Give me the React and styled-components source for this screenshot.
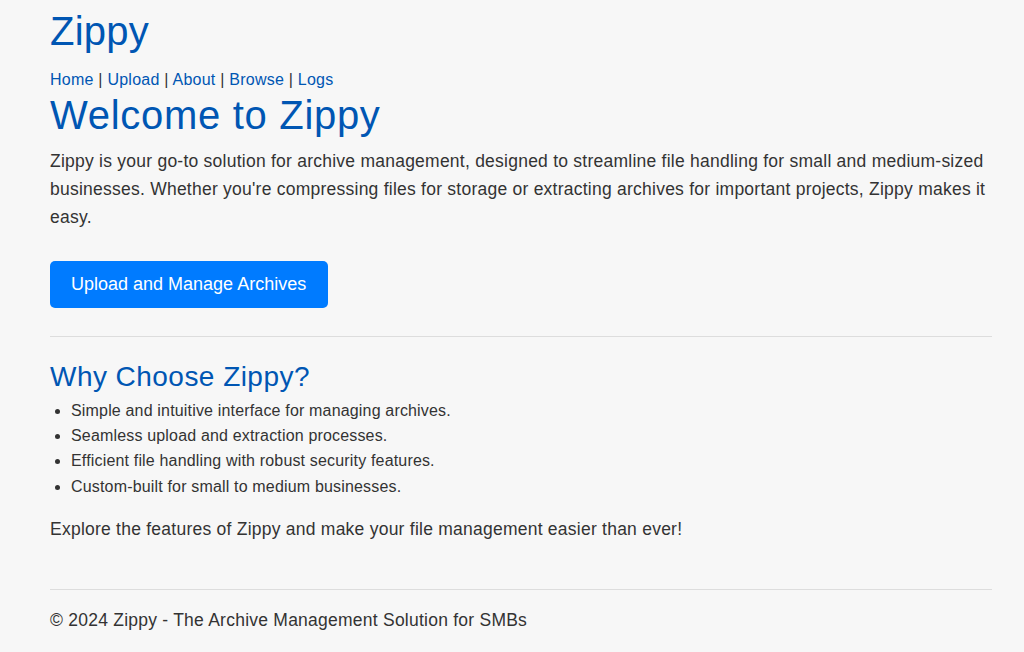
import React from "react";
import styled, { createGlobalStyle } from "styled-components";

const GlobalStyle = createGlobalStyle`
  html, body {
    margin: 0;
    padding: 0;
    background: #f7f7f7;
  }
  body {
    font-family: "Liberation Sans", Arial, sans-serif;
    font-size: 16px;
    line-height: 1.6;
    letter-spacing: 0.015em;
    color: #333;
  }
`;

const Page = styled.div`
  padding: 0 32px 0 50px;
`;

const Header = styled.header`
  padding-top: 7px;
`;

const Brand = styled.h1`
  margin: 0;
  font-size: 40px;
  font-weight: normal;
  line-height: 1.2;
  color: #0056b3;
`;

const Nav = styled.nav`
  margin-top: 15px;
  line-height: 1.2;
  color: #333;
`;

const NavLink = styled.a`
  color: #0056b3;
  text-decoration: none;
`;

const Title = styled.h2`
  margin: 2px 0 0;
  font-size: 40px;
  font-weight: normal;
  line-height: 1.2;
  letter-spacing: 0.7px;
  color: #0056b3;
`;

const Intro = styled.p`
  margin: 8px 0 0;
  font-size: 17.5px;
  line-height: 28px;
`;

const Button = styled.a`
  display: inline-block;
  margin-top: 30px;
  padding: 10px 22px 10px 21px;
  font-size: 18px;
  line-height: 27px;
  letter-spacing: 0;
  color: #fff;
  background: #007bff;
  border-radius: 5px;
  text-decoration: none;
`;

const Rule = styled.hr`
  margin: ${(p) => p.$top}px 0 0;
  border: 0;
  border-top: 1px solid #ddd;
`;

const Section = styled.section`
  padding-top: 23px;
`;

const SubTitle = styled.h3`
  margin: 0;
  font-size: 28px;
  font-weight: normal;
  line-height: 1.2;
  letter-spacing: 0.46px;
  color: #0056b3;
`;

const List = styled.ul`
  margin: 4px 0 0;
  padding-left: 21px;
  line-height: 25.3px;
  letter-spacing: 0.17px;
`;

const Outro = styled.p`
  margin: 16px 0 0;
  font-size: 17.5px;
  line-height: 28px;
`;

const Footer = styled.footer`
  padding-top: 16px;
  font-size: 17.5px;
  line-height: 28px;
`;

const links = ["Home", "Upload", "About", "Browse", "Logs"];

const features = [
  "Simple and intuitive interface for managing archives.",
  "Seamless upload and extraction processes.",
  "Efficient file handling with robust security features.",
  "Custom-built for small to medium businesses.",
];

export default function App() {
  return (
    <Page>
      <GlobalStyle />
      <Header>
        <Brand>Zippy</Brand>
        <Nav>
          {links.map((l, i) => (
            <React.Fragment key={l}>
              {i > 0 && " | "}
              <NavLink href="#">{l}</NavLink>
            </React.Fragment>
          ))}
        </Nav>
      </Header>
      <main>
        <Title>Welcome to Zippy</Title>
        <Intro>
          Zippy is your go-to solution for archive management, designed to
          streamline file handling for small and medium-sized businesses.
          Whether you're compressing files for storage or extracting archives
          for important projects, Zippy makes it easy.
        </Intro>
        <Button href="#">Upload and Manage Archives</Button>
        <Rule $top={28} />
        <Section>
          <SubTitle>Why Choose Zippy?</SubTitle>
          <List>
            {features.map((f) => (
              <li key={f}>{f}</li>
            ))}
          </List>
          <Outro>
            Explore the features of Zippy and make your file management easier
            than ever!
          </Outro>
        </Section>
      </main>
      <Rule $top={46} />
      <Footer>© 2024 Zippy - The Archive Management Solution for SMBs</Footer>
    </Page>
  );
}
